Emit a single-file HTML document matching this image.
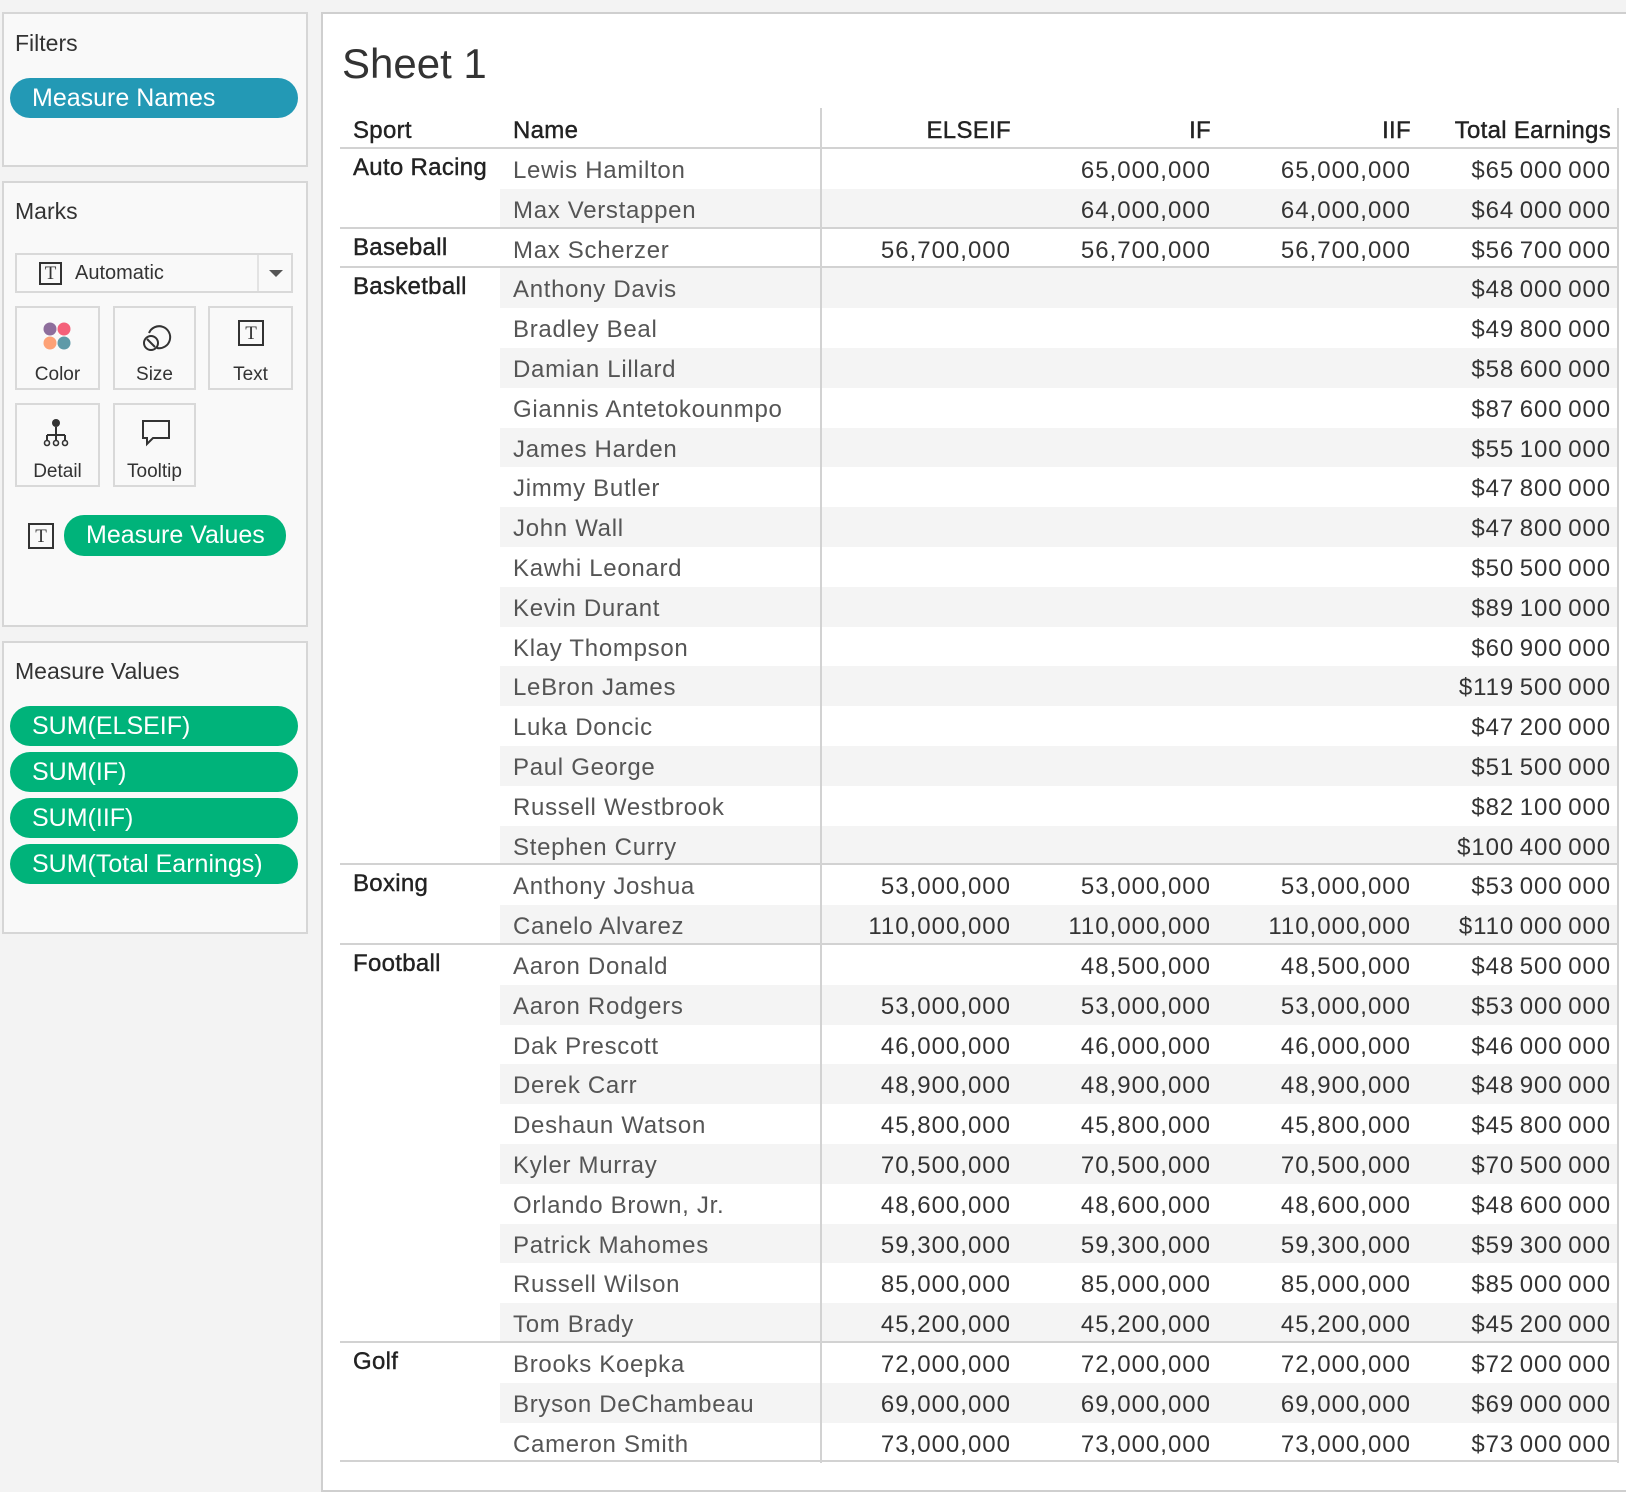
<!DOCTYPE html>
<html><head><meta charset="utf-8">
<style>
*{box-sizing:border-box;margin:0;padding:0}
body{width:1626px;height:1478px;background:#f3f3f3;font-family:"Liberation Sans",sans-serif;position:relative;overflow:hidden;color:#333}
.panel{position:absolute;background:#f9f9f9;border:2px solid #d6d6d6}
.lbl{position:absolute;font-size:23px;color:#333}
.pill{position:absolute;left:10px;width:288px;height:40px;border-radius:20px;color:#fff;font-size:25px;line-height:40px;padding-left:22px}
.g{background:#00b37a}
.btn{position:absolute;border:2px solid #d9d9d9;background:#f9f9f9;text-align:center;font-size:19px;color:#333}
.btn span{position:absolute;left:0;right:0;bottom:2px}
.tic{display:inline-block;border:2px solid #333;font-family:"Liberation Serif",serif;font-size:19px;line-height:20px;text-align:center;color:#333}
#sheet{position:absolute;left:321px;top:12px;width:1320px;height:1480px;background:#fff;border:2px solid #cfcfcf}
.t{position:absolute;font-size:24px;white-space:nowrap;letter-spacing:0.3px}
.h{top:117px;color:#222}
.row{position:absolute;left:340px;width:1278px;height:39.8px}
.row.s::before{content:"";position:absolute;left:160px;right:0;top:0;bottom:0;background:#f4f4f4}
.row.b{border-bottom:2px solid #d2d2d2}
.row span{position:absolute;top:8px;font-size:24px;white-space:nowrap;letter-spacing:0.7px}
.row .n{left:173px;color:#555}
.row .e{right:607px;color:#333}
.row .i{right:407px;color:#333}
.row .ii{right:207px;color:#333}
.row .tt{right:7px;color:#333;letter-spacing:0.9px}
.row .e,.row .i,.row .ii{letter-spacing:1px}
.sp{position:absolute;left:353px;font-size:24px;color:#222;letter-spacing:0.3px;-webkit-text-stroke:0.4px #222}
.vl{position:absolute;top:108px;height:1355px;border-left:2px solid #d2d2d2;z-index:5}
</style></head><body>

<div class="panel" style="left:2px;top:12px;width:306px;height:155px"></div>
<div class="lbl" style="left:15px;top:30px">Filters</div>
<div class="pill" style="top:78px;background:#2399b5">Measure Names</div>

<div class="panel" style="left:2px;top:181px;width:306px;height:446px"></div>
<div class="lbl" style="left:15px;top:198px">Marks</div>
<div style="position:absolute;left:15px;top:253px;width:278px;height:40px;border:2px solid #d9d9d9;background:#f9f9f9">
 <span class="tic" style="position:absolute;left:22px;top:7px;width:23px;height:23px">T</span>
 <span style="position:absolute;left:58px;top:7px;font-size:20px">Automatic</span>
 <div style="position:absolute;left:240px;top:0;bottom:0;border-left:2px solid #e3e3e3"></div>
 <div style="position:absolute;left:252px;top:15px;width:0;height:0;border-left:7px solid transparent;border-right:7px solid transparent;border-top:7px solid #555"></div>
</div>
<div class="btn" style="left:15px;top:306px;width:85px;height:84px">
 <svg style="position:absolute;left:25px;top:13px" width="32" height="32"><circle cx="8" cy="8" r="6.5" fill="#8e6e9c"/><circle cx="22" cy="8" r="6.5" fill="#f4617a"/><circle cx="8" cy="22" r="6.5" fill="#fda277"/><circle cx="22" cy="22" r="6.5" fill="#5e9aa8"/></svg>
 <span>Color</span></div>
<div class="btn" style="left:113px;top:306px;width:83px;height:84px">
 <svg style="position:absolute;left:25px;top:13px" width="32" height="32"><path d="M9 12 A11 11 0 1 1 17 27" fill="none" stroke="#333" stroke-width="2"/><circle cx="11" cy="22" r="7" fill="none" stroke="#333" stroke-width="2"/><line x1="7" y1="18" x2="15" y2="26" stroke="#333" stroke-width="2"/></svg>
 <span>Size</span></div>
<div class="btn" style="left:208px;top:306px;width:85px;height:84px">
 <span class="tic" style="position:absolute;left:28px;top:12px;width:26px;height:26px;bottom:auto;line-height:23px">T</span>
 <span>Text</span></div>
<div class="btn" style="left:15px;top:403px;width:85px;height:84px">
 <svg style="position:absolute;left:25px;top:13px" width="32" height="32"><circle cx="14" cy="5" r="4" fill="#333"/><path d="M14 9V17M5 17H23M5 17V22M14 17V22M23 17V22" stroke="#333" stroke-width="2" fill="none"/><circle cx="5" cy="25" r="2.5" fill="none" stroke="#333" stroke-width="1.6"/><circle cx="14" cy="25" r="2.5" fill="none" stroke="#333" stroke-width="1.6"/><circle cx="23" cy="25" r="2.5" fill="none" stroke="#333" stroke-width="1.6"/></svg>
 <span>Detail</span></div>
<div class="btn" style="left:113px;top:403px;width:83px;height:84px">
 <svg style="position:absolute;left:25px;top:13px" width="32" height="32"><path d="M3 3H29V20H13L7 26V20H3Z" fill="none" stroke="#333" stroke-width="2"/></svg>
 <span>Tooltip</span></div>
<span class="tic" style="position:absolute;left:28px;top:523px;width:26px;height:26px;line-height:23px">T</span>
<div class="pill g" style="left:64px;width:222px;top:515px;height:41px">Measure Values</div>

<div class="panel" style="left:2px;top:641px;width:306px;height:293px"></div>
<div class="lbl" style="left:15px;top:658px">Measure Values</div>
<div class="pill g" style="top:706px">SUM(ELSEIF)</div>
<div class="pill g" style="top:752px">SUM(IF)</div>
<div class="pill g" style="top:798px">SUM(IIF)</div>
<div class="pill g" style="top:844px">SUM(Total Earnings)</div>

<div id="sheet"></div>
<div style="position:absolute;left:342px;top:40px;font-size:42px;color:#333">Sheet 1</div>

<div class="t h" style="left:353px;-webkit-text-stroke:0.4px #222">Sport</div>
<div class="t h" style="left:513px;-webkit-text-stroke:0.4px #222">Name</div>
<div class="t h" style="right:615px;-webkit-text-stroke:0.4px #222">ELSEIF</div>
<div class="t h" style="right:415px;-webkit-text-stroke:0.4px #222">IF</div>
<div class="t h" style="right:215px;-webkit-text-stroke:0.4px #222">IIF</div>
<div class="t h" style="right:15px;-webkit-text-stroke:0.4px #222">Total Earnings</div>
<div style="position:absolute;left:340px;width:1278px;top:147px;border-top:2px solid #d2d2d2"></div>

<div id="rows"></div>
<div class="vl" style="left:820px"></div>
<div class="vl" style="left:1617px"></div>
<script>
var d=[
["Auto Racing","Lewis Hamilton","","65,000,000","65,000,000","65 000 000"],
["","Max Verstappen","","64,000,000","64,000,000","64 000 000",1],
["Baseball","Max Scherzer","56,700,000","56,700,000","56,700,000","56 700 000",1],
["Basketball","Anthony Davis","","","","48 000 000"],
["","Bradley Beal","","","","49 800 000"],
["","Damian Lillard","","","","58 600 000"],
["","Giannis Antetokounmpo","","","","87 600 000"],
["","James Harden","","","","55 100 000"],
["","Jimmy Butler","","","","47 800 000"],
["","John Wall","","","","47 800 000"],
["","Kawhi Leonard","","","","50 500 000"],
["","Kevin Durant","","","","89 100 000"],
["","Klay Thompson","","","","60 900 000"],
["","LeBron James","","","","119 500 000"],
["","Luka Doncic","","","","47 200 000"],
["","Paul George","","","","51 500 000"],
["","Russell Westbrook","","","","82 100 000"],
["","Stephen Curry","","","","100 400 000",1],
["Boxing","Anthony Joshua","53,000,000","53,000,000","53,000,000","53 000 000"],
["","Canelo Alvarez","110,000,000","110,000,000","110,000,000","110 000 000",1],
["Football","Aaron Donald","","48,500,000","48,500,000","48 500 000"],
["","Aaron Rodgers","53,000,000","53,000,000","53,000,000","53 000 000"],
["","Dak Prescott","46,000,000","46,000,000","46,000,000","46 000 000"],
["","Derek Carr","48,900,000","48,900,000","48,900,000","48 900 000"],
["","Deshaun Watson","45,800,000","45,800,000","45,800,000","45 800 000"],
["","Kyler Murray","70,500,000","70,500,000","70,500,000","70 500 000"],
["","Orlando Brown, Jr.","48,600,000","48,600,000","48,600,000","48 600 000"],
["","Patrick Mahomes","59,300,000","59,300,000","59,300,000","59 300 000"],
["","Russell Wilson","85,000,000","85,000,000","85,000,000","85 000 000"],
["","Tom Brady","45,200,000","45,200,000","45,200,000","45 200 000",1],
["Golf","Brooks Koepka","72,000,000","72,000,000","72,000,000","72 000 000"],
["","Bryson DeChambeau","69,000,000","69,000,000","69,000,000","69 000 000"],
["","Cameron Smith","73,000,000","73,000,000","73,000,000","73 000 000",1]];
var h="";
d.forEach(function(r,i){var top=149+i*39.8;
h+='<div class="row'+(i%2?' s':'')+(r[6]?' b':'')+'" style="top:'+top+'px"><span class="n">'+r[1]+'</span><span class="e">'+r[2]+'</span><span class="i">'+r[3]+'</span><span class="ii">'+r[4]+'</span><span class="tt">$'+r[5].replace(/ /g,'\u2009')+'</span></div>';
if(r[0])h+='<div class="sp" style="top:'+(top+5)+'px">'+r[0]+'</div>';});
document.getElementById('rows').innerHTML=h;
</script>
</body></html>
